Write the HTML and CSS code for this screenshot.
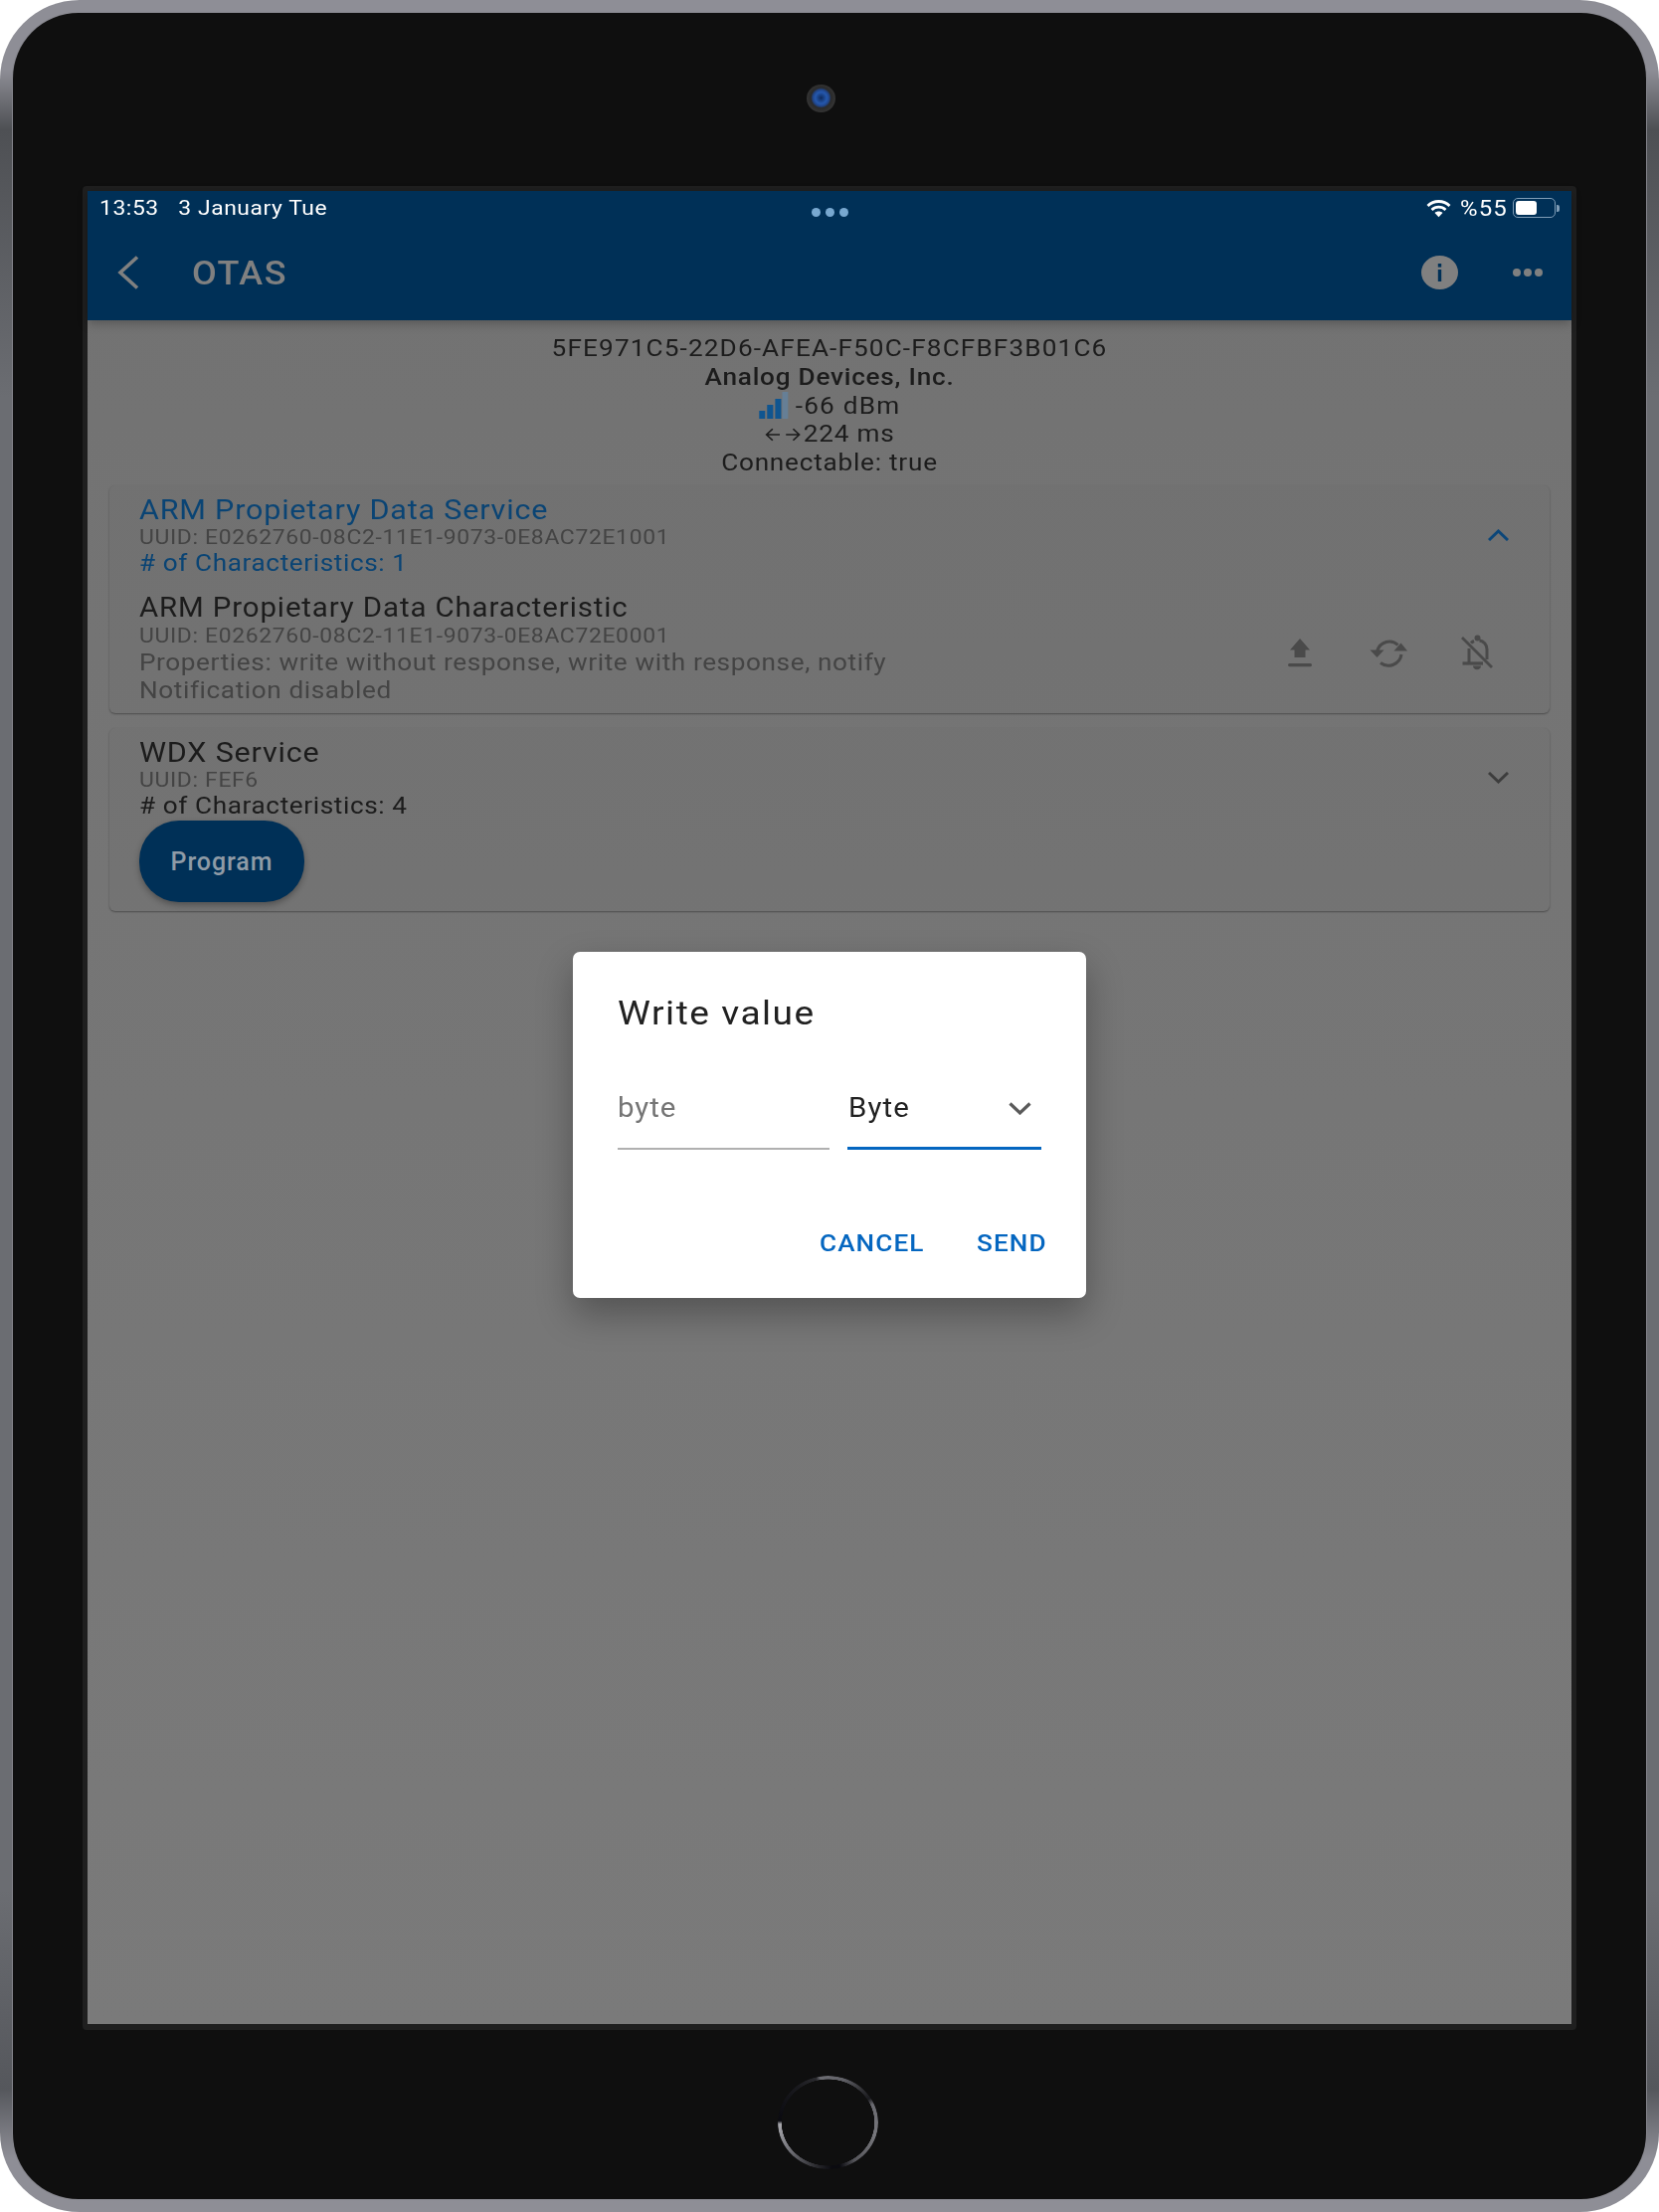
FILE: index.html
```html
<!DOCTYPE html>
<html lang="en">
<head>
    <meta charset="UTF-8">
    <title>OTAS</title>
    <link rel="stylesheet" href="styles.css">
</head>
<body>
<div class="device">
    <div class="bezel">
        <div class="camera"></div>
        <div class="screen-frame">
            <div class="screen">
                <header class="appbar">
                    <div class="statusbar">
                        <div class="status-left wide"><span>13:53</span><span>3 January Tue</span></div>
                        <div class="status-dots"><i></i><i></i><i></i></div>
                        <div class="status-right">
                            <svg width="25" height="19" viewBox="0 0 25 18" fill="none" stroke="#fff" stroke-width="2.800">
                                <path d="M1.500 6.500C7.500 .5 17.500 .5 23.500 6.500"/>
                                <path d="M5.500 10.400C9.500 6.600 15.500 6.600 19.500 10.400"/>
                                <path d="M12.500 17.800l-4-4.200c2.200-2 5.800-2 8 0z" fill="#fff" stroke="none"/>
                            </svg>
                            <span class="percent wide">%55</span>
                            <div class="battery"><div class="battery-level"></div></div>
                            <div class="battery-nub"></div>
                        </div>
                    </div>
                    <div class="toolbar">
                        <svg class="back" width="22" height="34" viewBox="0 0 22 34" fill="none" stroke="#808080" stroke-width="3.600">
                            <path d="M20 1.500L3 17l17 15.500"/>
                        </svg>
                        <div class="title-box"><span class="title wide">OTAS</span></div>
                        <svg class="info" width="37" height="34" viewBox="0 0 37 34">
                            <ellipse cx="18.500" cy="17" rx="18.500" ry="17" fill="#808080"/>
                            <rect x="16.800" y="14" width="3.400" height="12" fill="#003057"/>
                            <rect x="16.800" y="8" width="3.400" height="3.600" fill="#003057"/>
                        </svg>
                        <div class="more"><i></i><i></i><i></i></div>
                    </div>
                </header>

                <section class="device-info">
                    <div class="address">5FE971C5-22D6-AFEA-F50C-F8CFBF3B01C6</div>
                    <div class="maker">Analog Devices, Inc.</div>
                    <div class="info-line">
                        <svg width="27" height="27" viewBox="0 0 29 27" preserveAspectRatio="none">
                            <rect x="0" y="19" width="6" height="8" fill="#0f5590"/>
                            <rect x="8" y="13" width="6" height="14" fill="#0f5590"/>
                            <rect x="16" y="7" width="6" height="20" fill="#0f5590"/>
                            <rect x="23" y="0" width="6" height="27" fill="#667f96"/>
                        </svg>
                        <span class="rssi">-66 dBm</span>
                    </div>
                    <div class="info-line tight">
                        <svg width="34" height="16" viewBox="0 0 36 16" fill="none" stroke="#1c1c1c" stroke-width="1.600">
                            <path d="M15 8H2M8 2L2 8l6 6"/>
                            <path d="M21 8h13M28 2l6 6-6 6"/>
                        </svg>
                        <span>224 ms</span>
                    </div>
                    <div>Connectable: true</div>
                </section>

                <section class="card">
                    <div class="card-head">
                        <div class="card-lines wide">
                            <div class="name service active">ARM Propietary Data Service</div>
                            <div class="uuid">UUID: E0262760-08C2-11E1-9073-0E8AC72E1001</div>
                            <div class="count active"># of Characteristics: 1</div>
                        </div>
                        <svg width="21" height="12" viewBox="0 0 21 12" fill="none" stroke="#0b4679" stroke-width="3">
                            <path d="M1 11L10.500 2 20 11"/>
                        </svg>
                    </div>
                    <div class="char">
                        <div class="char-lines wide">
                            <div class="name">ARM Propietary Data Characteristic</div>
                            <div class="uuid">UUID: E0262760-08C2-11E1-9073-0E8AC72E0001</div>
                            <div class="prop">Properties: write without response, write with response, notify</div>
                            <div class="prop">Notification disabled</div>
                        </div>
                        <div class="char-actions">
                            <svg width="36" height="36" viewBox="0 0 36 36" fill="#4a4a4a">
                                <path d="M18 4L8 15.500h4.500V23h11v-7.500H28z"/>
                                <rect x="6" y="29" width="24" height="3.200" rx="1.600"/>
                            </svg>
                            <svg width="38" height="36" viewBox="0 0 38 36" fill="none">
                                <path d="M28.500 10.500C22 4.500 10.500 6.500 7.500 17" stroke="#4a4a4a" stroke-width="3"/>
                                <path d="M.5 15.500L7.500 23l7-7.500z" fill="#4a4a4a"/>
                                <path d="M32 20c-1.500 10-13 14.500-21 8.500" stroke="#4a4a4a" stroke-width="3"/>
                                <path d="M24.500 16.500L31.500 8.500l6.500 8z" fill="#4a4a4a"/>
                            </svg>
                            <svg width="36" height="36" viewBox="0 0 36 36" fill="none" stroke="#4a4a4a">
                                <path d="M10 14v14M28 25V15c0-5-3.500-8.500-7.500-9M15 6.500c-1 .4-2 1-3 2" stroke-width="3"/>
                                <path d="M3.500 29H24" stroke-width="3.200"/>
                                <path d="M3 3l30 30" stroke-width="2.800"/>
                                <circle cx="18.500" cy="3.500" r="3" fill="#4a4a4a" stroke="none"/>
                                <path d="M14 31.500c0 5 8 5 8 0z" fill="#4a4a4a" stroke="none"/>
                            </svg>
                        </div>
                    </div>
                </section>

                <section class="card second">
                    <div class="card-head">
                        <div class="card-lines wide">
                            <div class="name service">WDX Service</div>
                            <div class="uuid">UUID: FEF6</div>
                            <div class="count"># of Characteristics: 4</div>
                        </div>
                        <svg width="21" height="12" viewBox="0 0 21 12" fill="none" stroke="#3d3d3d" stroke-width="3">
                            <path d="M1 1l9.500 9L20 1"/>
                        </svg>
                    </div>
                    <button class="program">Program</button>
                </section>

                <div class="dialog">
                    <h2 class="wide">Write value</h2>
                    <div class="fields">
                        <div class="byte-input">
                            <input class="wide" type="text" placeholder="byte">
                        </div>
                        <div class="byte-select">
                            <span class="wide">Byte</span>
                            <svg width="23" height="13" viewBox="0 0 23 13" fill="none" stroke="#5a5a5a" stroke-width="3.200">
                                <path d="M1.500 1.500l10 9.500 10-9.500"/>
                            </svg>
                        </div>
                    </div>
                    <div class="dialog-actions">
                        <button class="wide">CANCEL</button>
                        <button class="wide">SEND</button>
                    </div>
                </div>
            </div>
        </div>
        <div class="home-button"></div>
    </div>
</div>
</body>
</html>
```

FILE: styles.css
```css
* {
    box-sizing: border-box;
}
body {
    margin: 0;
    background-color: #fff;
    font-family: Roboto, "Liberation Sans", sans-serif;
}
/* the capture is stretched sideways, so the text is too */
.wide {
    transform: scaleX(1.09);
    transform-origin: left center;
}
.device {
    width: 1668px;
    height: 2224px;
    padding: 13px;
    border-radius: 80px;
    background: linear-gradient(180deg, #8e8e96 0, #8e8e96 70px, #4e5054 130px, #6b6d72 400px, #6b6d72 1900px, #55575c 2100px, #8e8e96 2170px);
}
.bezel {
    height: 2198px;
    padding: 72px 70px 0;
    display: flex;
    flex-direction: column;
    border-radius: 66px;
    background-color: #0f0f0f;
    box-shadow: 0 0 0 1px #85858c;
}
.camera {
    width: 29px;
    height: 28px;
    margin-left: 728px;
    border-radius: 50%;
    background: radial-gradient(circle at 50% 48%, #0e2a5c 0, #2558ad 28%, #20458a 40%, #2a2a2a 50%, #333 68%, #222 100%);
}
.screen-frame {
    width: 1502px;
    height: 1854px;
    margin-top: 74px;
    border: 5px solid #1f1f1f;
    border-bottom-width: 6px;
    border-radius: 4px;
}
.screen {
    position: relative;
    height: 100%;
    background: linear-gradient(180deg, #727272, #7a7a7a);
    color: #1c1c1c;
    font-size: 24px;
}

/* top bar */
.appbar {
    height: 130px;
    background-color: #003057;
    box-shadow: 0 3px 10px rgba(0,0,0,0.25);
}
.statusbar {
    height: 34px;
    padding: 0 12px;
    display: grid;
    grid-template-columns: 1fr auto 1fr;
    align-items: center;
    color: #fff;
    font-size: 21px;
    letter-spacing: 0.5px;
}
.status-left {
    display: flex;
    gap: 18px;
}
.status-dots {
    display: flex;
    gap: 5px;
    padding-top: 8px;
}
.status-dots i {
    width: 9px;
    height: 9px;
    border-radius: 50%;
    background-color: #78a8d0;
}
.status-right {
    display: flex;
    align-items: center;
    justify-content: flex-end;
}
.percent {
    width: 48px;
    margin: 0 5px 0 9px;
    font-size: 22px;
    letter-spacing: 1px;
    white-space: nowrap;
}
.battery {
    width: 43px;
    height: 20px;
    padding: 2px;
    border: 1px solid #7f9cb6;
    border-radius: 5px;
}
.battery-level {
    width: 21px;
    height: 100%;
    border-radius: 3px;
    background-color: #fff;
}
.battery-nub {
    width: 3px;
    height: 7px;
    margin-left: 1px;
    border-radius: 0 2px 2px 0;
    background-color: #7f9cb6;
}
.toolbar {
    height: 96px;
    padding: 0 29px 0 30px;
    display: flex;
    align-items: center;
}
.title-box {
    margin-left: 53px;
    flex: 1;
}
.title {
    display: inline-block;
    color: #808080;
    font-size: 33px;
    font-weight: 500;
    letter-spacing: 1.400px;
}
.more {
    margin-left: 55px;
    display: flex;
    gap: 3px;
}
.more i {
    width: 8px;
    height: 8px;
    border-radius: 50%;
    background-color: #808080;
}

/* device data */
.device-info {
    padding-top: 14px;
    height: 157px;
    text-align: center;
    line-height: 28.800px;
    letter-spacing: 0.700px;
    transform: scaleX(1.09);
}
.address {
    letter-spacing: 1.040px;
}
.maker {
    font-weight: 500;
}
.info-line {
    display: flex;
    align-items: center;
    justify-content: center;
    gap: 7px;
}
.info-line.tight {
    gap: 2px;
}
.rssi {
    letter-spacing: 1.100px;
}

/* cards */
.card {
    margin: 9px 22px 0;
    padding: 9px 41px 9px 30px;
    border-radius: 6px;
    background-color: rgba(0,0,0,0.015);
    box-shadow: 0 1px 2px rgba(0,0,0,0.35);
    letter-spacing: 0.550px;
}
.card.second {
    margin-top: 15px;
}
.card-head,
.char {
    display: flex;
    align-items: center;
    justify-content: space-between;
}
.name {
    height: 30px;
    line-height: 31px;
    font-size: 27px;
    letter-spacing: 0.800px;
}
.name.service {
    font-size: 28px;
    letter-spacing: 0.730px;
}
.uuid {
    height: 26px;
    line-height: 27px;
    color: #444;
    font-size: 21px;
    letter-spacing: 0.600px;
}
.count {
    height: 26px;
    line-height: 26px;
}
.active {
    color: #0a4474;
}
.char {
    margin-top: 17px;
    padding-right: 14px;
}
.prop {
    height: 28px;
    line-height: 28px;
    color: #444;
}
.char-actions {
    display: flex;
    gap: 52px;
    margin-top: 8px;
}
.program {
    display: block;
    width: 166px;
    height: 82px;
    margin-top: 2px;
    border: none;
    border-radius: 40px;
    background-color: #003057;
    color: #8f9ba6;
    font-family: inherit;
    font-size: 25px;
    font-weight: 500;
    letter-spacing: 0.900px;
    box-shadow: 0 3px 6px rgba(0,0,0,0.3);
}

/* write dialog */
.dialog {
    position: absolute;
    left: 488px;
    top: 765px;
    width: 516px;
    height: 348px;
    padding: 41px 45px 0;
    border-radius: 7px;
    background-color: #fff;
    box-shadow: 0 16px 36px rgba(0,0,0,0.3);
}
.dialog h2 {
    margin: 0;
    height: 41px;
    line-height: 41px;
    color: #212121;
    font-size: 34px;
    font-weight: 400;
    letter-spacing: 1.400px;
}
.fields {
    margin-top: 51px;
    display: flex;
    gap: 18px;
}
.byte-input {
    width: 213px;
    height: 66px;
    padding: 3px 0 0;
    border-bottom: 2px solid #b0b0b0;
}
.byte-input input {
    display: block;
    width: 180px;
    height: 42px;
    padding: 0;
    border: none;
    outline: none;
    background: none;
    font-family: inherit;
    font-size: 27px;
    letter-spacing: 0.900px;
}
.byte-input input::placeholder {
    color: #757575;
    opacity: 1;
}
.byte-select {
    width: 195px;
    height: 66px;
    padding: 2px 10px 17px 1px;
    display: flex;
    align-items: center;
    justify-content: space-between;
    border-bottom: 3px solid #0466c0;
    color: #212121;
    font-size: 27px;
    letter-spacing: 1px;
}
.dialog-actions {
    margin-top: 79px;
    display: flex;
    justify-content: flex-end;
    gap: 61px;
}
.dialog-actions button {
    padding: 0;
    height: 30px;
    border: none;
    background: none;
    color: #0466c0;
    font-family: inherit;
    font-size: 24px;
    font-weight: 500;
    letter-spacing: 1px;
}

/* home button */
.home-button {
    width: 101px;
    height: 94px;
    margin: 46px 0 0 699px;
    border-radius: 50%;
    background: conic-gradient(#6a6a70 0deg, #606066 20deg, #2a2a2e 50deg, #1a1a1e 60deg, #6a6a70 68deg, #77777c 105deg, #55555a 145deg, #0b0b10 165deg, #0b0b10 175deg, #2a2a2e 195deg, #6a6a70 230deg, #a8a8ad 268deg, #0a0a10 272deg, #1a1a1e 320deg, #2a2a2e 345deg, #6a6a70 350deg, #6a6a70 360deg);
    -webkit-mask: radial-gradient(ellipse closest-side, transparent 92%, #000 93%);
    mask: radial-gradient(ellipse closest-side, transparent 92%, #000 93%);
}
```
